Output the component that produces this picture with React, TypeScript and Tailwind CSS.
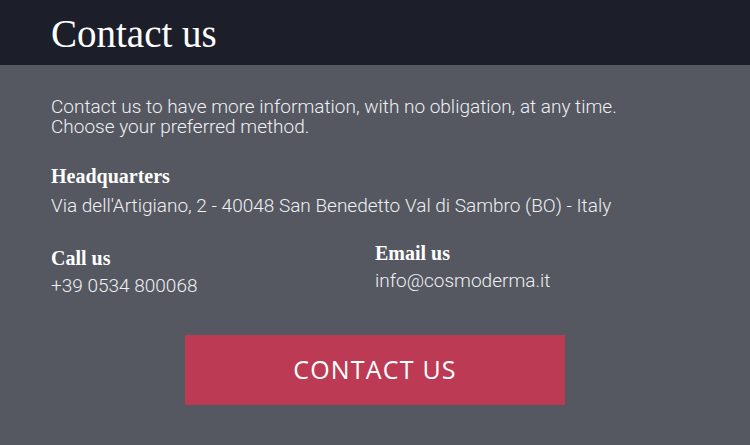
import React from 'react';

const serif = { fontFamily: '"Liberation Serif", "DejaVu Serif", serif' };

const App: React.FC = () => {
  return (
    <div className="w-[750px] h-[445px] bg-[#555860] text-white overflow-hidden">
      <div className="h-[65px] bg-[#1c1f2a] px-[51px] pt-[12px]">
        <h1 className="text-[39px] leading-[44px] font-normal" style={serif}>
          Contact us
        </h1>
      </div>
      <div className="px-[51px] pt-[32px] font-['Roboto',sans-serif] font-light text-[#eef0f3]">
        <p className="text-[19px] leading-[20px]">
          Contact us to have more information, with no obligation, at any time.
          <br />
          Choose your preferred method.
        </p>
        <h2 className="mt-[26px] text-[20px] leading-[26px] font-bold text-white" style={serif}>
          Headquarters
        </h2>
        <p className="mt-[6px] text-[19px] leading-[22px]">
          Via dell'Artigiano, 2 - 40048 San Benedetto Val di Sambro (BO) - Italy
        </p>
        <div className="mt-[23px] flex">
          <div className="w-[324px] pt-[5px]">
            <h2 className="text-[20px] leading-[26px] font-bold text-white" style={serif}>
              Call us
            </h2>
            <p className="mt-[4px] text-[19px] leading-[22px]">+39 0534 800068</p>
          </div>
          <div>
            <h2 className="text-[20px] leading-[26px] font-bold text-white" style={serif}>
              Email us
            </h2>
            <p className="mt-[4px] text-[19px] leading-[22px]">info@cosmoderma.it</p>
          </div>
        </div>
        <div className="mt-[38px] flex justify-center">
          <button className="w-[380px] h-[70px] bg-[#bd3a54] text-white text-[25px] font-['Open_Sans',sans-serif] font-normal tracking-[1.2px]">
            CONTACT US
          </button>
        </div>
      </div>
    </div>
  );
};

export default App;
